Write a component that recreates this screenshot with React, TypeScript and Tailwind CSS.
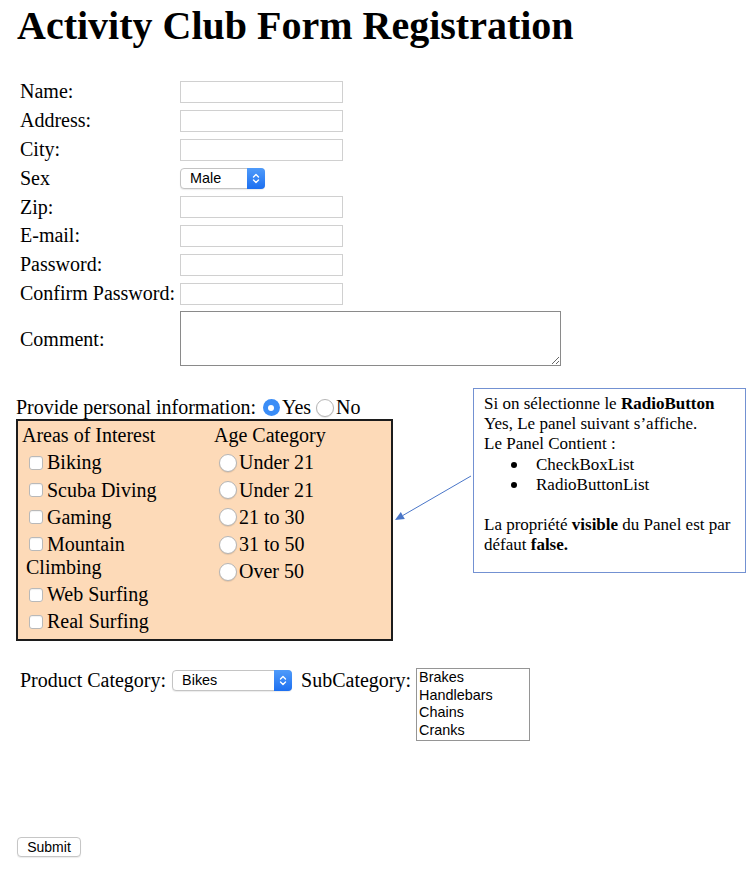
import React from 'react';

const serif = { fontFamily: '"Liberation Serif", "Times New Roman", serif' };

const formRows = ['Name:', 'Address:', 'City:', 'Sex', 'Zip:', 'E-mail:', 'Password:', 'Confirm Password:'];
const interests = ['Biking', 'Scuba Diving', 'Gaming'];
const ages = ['Under 21', 'Under 21', '21 to 30', '31 to 50', 'Over 50'];
const subCategories = ['Brakes', 'Handlebars', 'Chains', 'Cranks'];

const Stepper: React.FC = () => (
  <span className="absolute right-[-1px] top-[-1px] bottom-[-1px] w-[18px] rounded-r-[4px] bg-gradient-to-b from-[#4f9bfa] to-[#1c6ff0] flex items-center justify-center">
    <svg width="8" height="13" viewBox="0 0 8 13" fill="none" stroke="white" strokeWidth="1.4" strokeLinecap="round" strokeLinejoin="round">
      <path d="M1.5 5 L4 2.5 L6.5 5" />
      <path d="M1.5 8 L4 10.5 L6.5 8" />
    </svg>
  </span>
);

const FakeSelect: React.FC<{ value: string; width: string }> = ({ value, width }) => (
  <div className={`relative ${width} h-[21px] rounded-[4px] border border-[#c4c4c4] bg-white shadow-[0_1px_1px_rgba(0,0,0,0.08)] font-['Liberation_Sans',Arial,sans-serif] text-[14.4px] leading-[19px] pl-[9px] text-black`}>
    {value}
    <Stepper />
  </div>
);

const CheckBox: React.FC = () => (
  <span className="inline-block w-[14px] h-[14px] rounded-[3px] border border-[#b9b9b9] bg-white shadow-[inset_0_1px_1px_rgba(0,0,0,0.06)] shrink-0" />
);

const Radio: React.FC<{ checked?: boolean }> = ({ checked }) =>
  checked ? (
    <span className="inline-flex w-[17px] h-[17px] rounded-full bg-[#3b8df6] items-center justify-center shrink-0">
      <span className="w-[6px] h-[6px] rounded-full bg-white" />
    </span>
  ) : (
    <span className="inline-block w-[18px] h-[18px] rounded-full border border-[#b5b5b5] bg-white shadow-[0_1px_1px_rgba(0,0,0,0.1)] shrink-0" />
  );

export default function App() {
  return (
    <div className="relative w-[752px] min-h-[878px] bg-white text-black text-[20px]" style={serif}>
      <h1 className="ml-[17px] pt-[4px] text-[40px] font-bold leading-[44px]">Activity Club Form Registration</h1>

      {/* main form table */}
      <div className="mt-[29.6px]">
        {formRows.map((label) => (
          <div key={label} className="flex items-center h-[28.8px]">
            <span className="w-[180px] pl-[20px] leading-[23px] whitespace-nowrap">{label}</span>
            {label === 'Sex' ? (
              <FakeSelect value="Male" width="w-[85px]" />
            ) : (
              <input
                type={label.includes('Password') ? 'password' : 'text'}
                className="w-[163px] h-[22px] border border-[#d0d0d0] bg-white outline-none"
              />
            )}
          </div>
        ))}
        <div className="flex items-center mt-[2.6px]">
          <span className="w-[180px] pl-[20px] leading-[23px] mt-[3px]">Comment:</span>
          <textarea className="w-[381px] h-[55px] border border-[#8a8a8a] bg-white outline-none block" />
        </div>
      </div>

      {/* personal info */}
      <div className="mt-[30.5px] ml-[16px]">
        <div className="flex items-center h-[23px] leading-[23px]">
          <span>Provide personal information:</span>
          <span className="ml-[7px] flex"><Radio checked /></span>
          <span className="ml-[2px]">Yes</span>
          <span className="ml-[5px] flex"><Radio /></span>
          <span className="ml-[2px]">No</span>
        </div>

        <div className="w-[377px] h-[222px] border-2 border-[#1c1c1c] bg-[#fddab8] grid grid-cols-[196px_1fr] leading-[23px]">
          <div className="pl-[4px]">
            <div className="h-[28px] flex items-center">Areas of Interest</div>
            {interests.map((item) => (
              <div key={item} className="h-[27.3px] flex items-center pl-[7px] gap-[4px]">
                <CheckBox />
                <span>{item}</span>
              </div>
            ))}
            <div className="h-[50px] pt-[2px]">
              <div className="flex items-center pl-[7px] gap-[4px] h-[23px]">
                <CheckBox />
                <span>Mountain</span>
              </div>
              <div className="pl-[4px]">Climbing</div>
            </div>
            {['Web Surfing', 'Real Surfing'].map((item) => (
              <div key={item} className="h-[27.3px] flex items-center pl-[7px] gap-[4px]">
                <CheckBox />
                <span>{item}</span>
              </div>
            ))}
          </div>
          <div>
            <div className="h-[28px] flex items-center">Age Category</div>
            {ages.map((age, i) => (
              <div key={i} className="h-[27.3px] flex items-center pl-[5px] gap-[2px]">
                <Radio />
                <span>{age}</span>
              </div>
            ))}
          </div>
        </div>
      </div>

      {/* product row */}
      <div className="mt-[27px] ml-[20px] flex items-start">
        <span className="leading-[23px] mt-[0.5px]">Product Category:</span>
        <div className="ml-[6px] mt-[2px]">
          <FakeSelect value="Bikes" width="w-[120px]" />
        </div>
        <span className="ml-[9px] leading-[23px] mt-[0.5px]">SubCategory:</span>
        <div className="ml-[5px] w-[114px] h-[73px] border border-[#959595] bg-white pl-[2px] font-['Liberation_Sans',Arial,sans-serif] text-[14.4px] leading-[17.6px]">
          {subCategories.map((s) => (
            <div key={s}>{s}</div>
          ))}
        </div>
      </div>

      <button className="mt-[96px] ml-[17px] w-[64px] h-[20px] rounded-[4px] border border-[#c6c6c6] bg-white shadow-[0_1px_1px_rgba(0,0,0,0.08)] font-['Liberation_Sans',Arial,sans-serif] text-[14px] leading-[18px] text-black">
        Submit
      </button>

      {/* annotation callout */}
      <div className="absolute left-[473px] top-[388px] w-[273px] h-[185px] border border-[#7391d2] bg-white pl-[10px] pt-[5px] text-[17px] leading-[20.2px]">
        <div>Si on sélectionne le <b>RadioButton</b></div>
        <div>Yes, Le panel suivant s’affiche.</div>
        <div>Le Panel Contient :</div>
        {['CheckBoxList', 'RadioButtonList'].map((b) => (
          <div key={b} className="flex items-center">
            <span className="ml-[27px] w-[6px] h-[6px] rounded-full bg-black" />
            <span className="ml-[19px]">{b}</span>
          </div>
        ))}
        <div className="h-[20.2px]" />
        <div>La propriété <b>visible</b> du Panel est par</div>
        <div>défaut <b>false.</b></div>
      </div>
      <svg className="absolute left-[390px] top-[470px]" width="85" height="56" viewBox="0 0 85 56">
        <line x1="81" y1="6" x2="12.8" y2="45.5" stroke="#4a76c8" strokeWidth="1" />
        <polygon points="5,50 14.8,49 10.8,42" fill="#4a76c8" />
      </svg>
    </div>
  );
}
